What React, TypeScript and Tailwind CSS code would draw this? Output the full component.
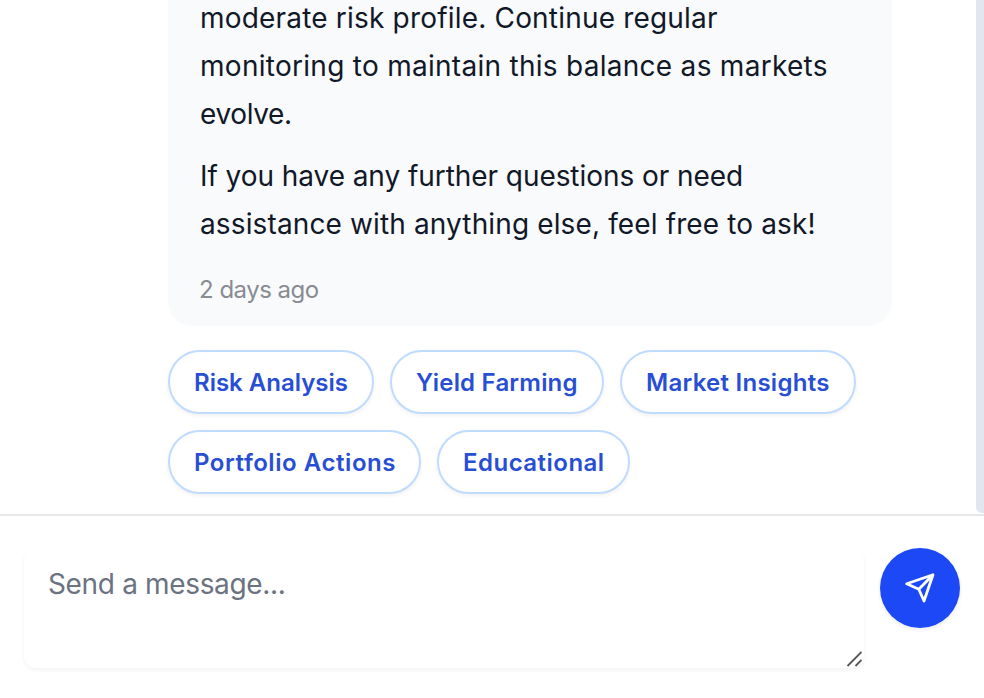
const chips = [
  { label: "Risk Analysis", width: "w-[206px]", tracking: "tracking-[0px]" },
  { label: "Yield Farming", width: "w-[214px]", tracking: "tracking-[0.2px]" },
  { label: "Market Insights", width: "w-[236px]", tracking: "tracking-[0.27px]" },
  { label: "Portfolio Actions", width: "w-[253px]", tracking: "tracking-[0.56px]" },
  { label: "Educational", width: "w-[193px]", tracking: "tracking-[0.48px]" },
];

function Message() {
  return (
    <article className="w-[724px] shrink-0 rounded-b-[24px] bg-[#f9fafc] px-8 pb-5 text-[28px] leading-[48px] text-[#111827]">
      <p className="flex flex-col items-start whitespace-nowrap">
        <span className="tracking-[0.19px]">moderate risk profile. Continue regular</span>
        <span className="tracking-[0.28px]">monitoring to maintain this balance as markets</span>
        <span className="tracking-[-0.35px]">evolve.</span>
      </p>
      <p className="mt-3.5 flex flex-col items-start whitespace-nowrap">
        <span className="tracking-[-0.06px]">If you have any further questions or need</span>
        <span className="tracking-[0.13px]">assistance with anything else, feel free to ask!</span>
      </p>
      <p className="mt-[26px] -ml-px text-[24px] leading-8 tracking-[-0.5px] text-[#888b92]">2 days ago</p>
    </article>
  );
}

function Composer() {
  return (
    <footer className="flex h-[184px] shrink-0 items-start gap-4 border-t-2 border-[#e5e7eb] px-6 pt-8">
      <div className="relative h-[120px] w-[840px]">
        <textarea
          placeholder="Send a message..."
          className="block size-full resize-none rounded-xl bg-white px-6 py-4 text-[28px] leading-10 tracking-[-0.34px] text-[#111827] shadow-[0_2px_4px_rgba(0,0,0,0.05)] outline-none placeholder:text-[#6b7280]"
        />
        <svg className="pointer-events-none absolute right-0.5 bottom-px" width="16" height="16" viewBox="0 0 16 16" fill="none" stroke="#555" strokeWidth="1.8">
          <path d="M1.5 15 15.5 1M9.5 15 15.5 9" />
        </svg>
      </div>
      <button aria-label="Send" className="flex size-20 items-center justify-center rounded-full bg-[#1c48f5] shadow-[0_2px_4px_rgba(0,0,0,0.08)]">
        <svg width="32" height="32" viewBox="0 0 32 32" fill="none" stroke="white" strokeWidth="2.8" strokeLinecap="round" strokeLinejoin="round">
          <path d="M29 2.7 2.7 11.7 14.8 17.2 20 29ZM29 2.7 14.8 17.2" />
        </svg>
      </button>
    </footer>
  );
}

export default function App() {
  return (
    <div className="flex h-[698px] w-[984px] flex-col overflow-hidden bg-white font-['Inter',sans-serif]">
      <main className="flex h-[514px] shrink-0 justify-between overflow-hidden pl-[168px]">
        <div className="-mt-1.5 flex flex-col">
          <Message />
          <div className="mt-6 flex w-[724px] flex-wrap gap-4">
            {chips.map((chip) => (
              <button
                key={chip.label}
                className={`flex h-16 items-center whitespace-nowrap rounded-full border-2 border-[#bfdbfe] bg-white pt-0.5 pl-6 text-[24px] leading-8 font-semibold text-[#284ed3] shadow-[0_2px_4px_rgba(0,0,0,0.06)] ${chip.width} ${chip.tracking}`}
              >
                {chip.label}
              </button>
            ))}
          </div>
        </div>
        <div className="h-[513px] w-2 rounded-bl-md bg-[#e1e6ef]" />
      </main>
      <Composer />
    </div>
  );
}
